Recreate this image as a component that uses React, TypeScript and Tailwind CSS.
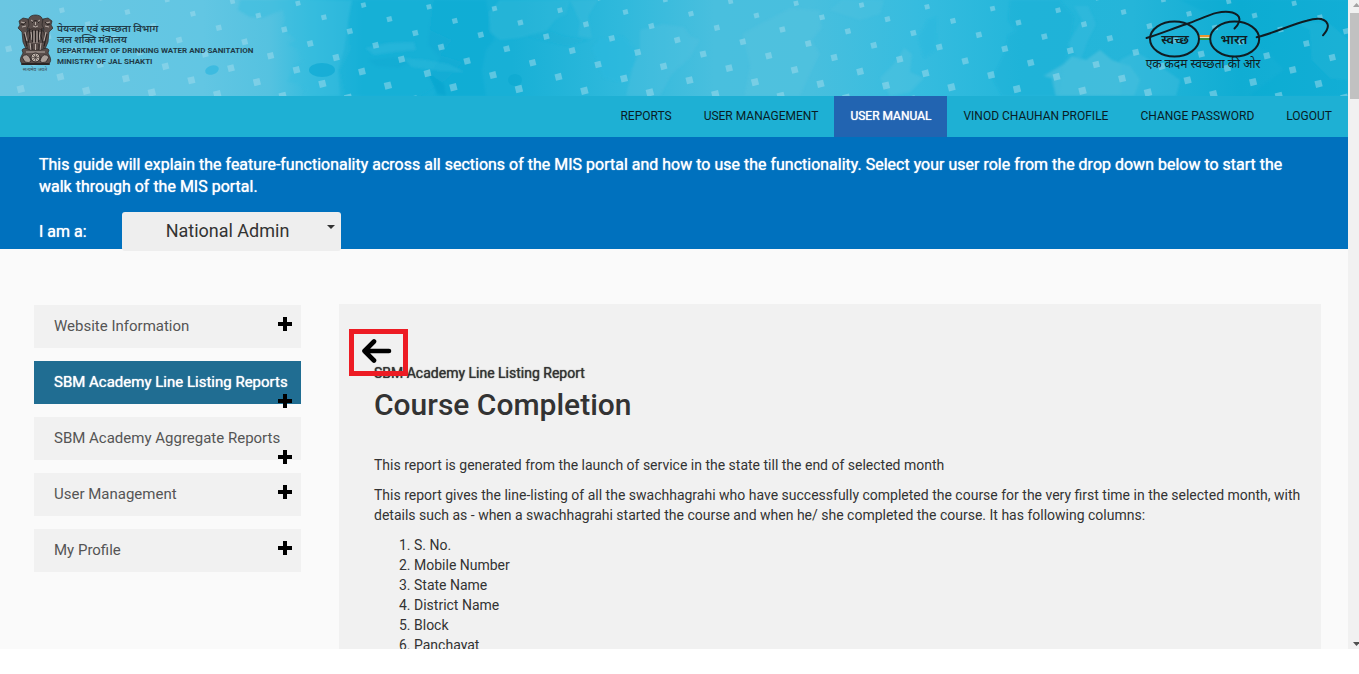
import React from "react";

const navItems = [
  { label: "REPORTS" },
  { label: "USER MANAGEMENT" },
  { label: "USER MANUAL", active: true },
  { label: "VINOD CHAUHAN PROFILE" },
  { label: "CHANGE PASSWORD" },
  { label: "LOGOUT" },
];

const sections = [
  { label: "Website Information" },
  { label: "SBM Academy Line Listing Reports", active: true, low: true },
  { label: "SBM Academy Aggregate Reports", low: true },
  { label: "User Management" },
  { label: "My Profile" },
];

const columns = ["S. No.", "Mobile Number", "State Name", "District Name", "Block", "Panchayat"];

// Confetti squares sit on a slanted lattice and grow towards the bottom.
const confetti: { x: number; y: number; s: number }[] = [];
for (let k = -12; k < 30; k++) {
  for (let m = -6; m < 12; m++) {
    const x = 298 + 65.5 * k + 25.9 * m;
    const y = 3.3 + 1.75 * k + 14 * m;
    if (x > -5 && x < 1355 && y > -4 && y < 100) {
      confetti.push({ x, y, s: 4.6 + y / 38 });
    }
  }
}

function BannerArt() {
  return (
    <svg
      className="absolute inset-0 h-full w-full"
      viewBox="0 0 1348 96"
      preserveAspectRatio="xMidYMid slice"
      aria-hidden="true"
    >
      <defs>
        <linearGradient id="wash" x1="0" x2="1" y1="0" y2="0">
          <stop offset="0" stopColor="#6ac6e2" />
          <stop offset="0.15" stopColor="#62c6e3" />
          <stop offset="0.2" stopColor="#55c2e0" />
          <stop offset="0.23" stopColor="#35bcde" />
          <stop offset="0.27" stopColor="#17b0d7" />
          <stop offset="0.38" stopColor="#18b0d6" />
          <stop offset="0.46" stopColor="#2fb9dc" />
          <stop offset="0.53" stopColor="#49bfde" />
          <stop offset="0.6" stopColor="#48bfde" />
          <stop offset="0.68" stopColor="#36bcdf" />
          <stop offset="0.76" stopColor="#23b6da" />
          <stop offset="0.84" stopColor="#25b5d9" />
          <stop offset="0.92" stopColor="#10add3" />
          <stop offset="1" stopColor="#18b0d6" />
        </linearGradient>
        <filter id="soft">
          <feGaussianBlur stdDeviation="1.2" />
        </filter>
      </defs>
      <rect width="1348" height="96" fill="url(#wash)" />
      <g filter="url(#soft)" opacity=".65">
        <path d="M240 0L238 10L250 17L262 18L272 14L283 10L285 20L282 28L290 35L297 40L288 44L299 50L304 62L294 66L290 76L288 82L300 84L307 90L304 96L345 96L340 70L350 50L348 20L352 0Z" fill="#38bddf" opacity=".8" />
        <path d="M352 0L348 22L344 50L338 70L340 96L420 96L446 80L462 62L440 55L452 40L430 30L434 0Z" fill="#12aed6" opacity=".55" />
        <path d="M434 0L430 24L428 45L440 58L430 72L436 96L486 96L482 70L486 50L494 40L490 22L486 0Z" fill="#08a7d0" opacity=".45" />
        <path d="M365 48L388 43L414 42L416 50L394 52L374 55Z" fill="#3cbddd" opacity=".6" />
        <path d="M368 60L394 57L412 62L398 68L376 66Z" fill="#06a5cd" opacity=".4" />
        <path d="M402 58L426 60L448 64L464 72L440 71L412 67Z" fill="#3cbddd" opacity=".5" />
        <path d="M427 72L444 84L446 96L438 94Z" fill="#029fcb" opacity=".7" />
        <path d="M489 12L500 0L570 0L566 14L555 20L545 33L518 38L500 40L490 32Z" fill="#37badb" opacity=".6" />
        <path d="M524 36L548 30L564 36L590 40L566 46L548 42Z" fill="#10acd2" opacity=".35" />
        <path d="M592 48L600 38L614 40L622 36L635 48L634 66L622 82L604 78L598 64Z" fill="#2bb9e0" opacity=".7" />
        <path d="M570 0L580 22L578 36L592 38L588 16L598 0Z" fill="#58c3df" opacity=".3" />
        <path d="M640 30L662 24L684 27L690 36L700 40L690 58L672 74L660 96L626 96L632 70L640 50Z" fill="#55c2df" opacity=".5" />
        <path d="M742 34L760 24L790 8L820 10L822 28L812 40L820 54L812 70L800 96L744 96L750 66Z" fill="#60c5df" opacity=".4" />
        <path d="M830 10L842 0L884 0L880 14L860 20Z" fill="#5bc4df" opacity=".4" />
        <path d="M892 66L898 58L904 48L912 54L910 72L924 78L910 92L890 96L880 78Z" fill="#5ec5df" opacity=".5" />
        <path d="M918 38L928 20L937 17L936 50L924 58Z" fill="#27b7de" opacity=".6" />
        <path d="M1010 0L1008 20L1016 31L1008 35L1004 54L992 78L1002 96L1060 96L1064 66L1070 44L1074 16L1060 0Z" fill="#12add4" opacity=".45" />
        <path d="M1064 64L1072 56L1086 60L1100 50L1112 60L1130 66L1140 80L1134 96L1056 96L1052 78L1044 76Z" fill="#5cc4df" opacity=".8" />
        <path d="M1074 6L1082 20L1074 34L1068 44L1080 62L1088 40L1096 24L1088 6Z" fill="#41bedf" opacity=".5" />
        <path d="M1120 60L1136 52L1160 66L1180 80L1176 96L1120 96Z" fill="#48bfdf" opacity=".6" />
        <path d="M1180 0L1200 10L1230 16L1240 40L1268 52L1284 70L1262 86L1250 96L1348 96L1348 0Z" fill="#08a8d1" opacity=".35" />
        <path d="M1290 20L1310 30L1312 60L1330 78L1348 80L1348 40L1330 24Z" fill="#34badb" opacity=".35" />
      </g>
      <ellipse cx="322" cy="70" rx="13" ry="7" fill="#12abd4" opacity=".8" />
      <ellipse cx="212" cy="70" rx="7" ry="4.5" fill="#3dbbe0" transform="rotate(-18 212 70)" />
      <ellipse cx="515" cy="80" rx="7" ry="6" fill="#06a6ce" opacity=".4" />
      <g fill="#a2dced" opacity=".5">
        {confetti.map(({ x, y, s }) => (
          <rect
            key={`${x}-${y}`}
            x={x - s / 2}
            y={y - s / 2}
            width={s}
            height={s}
            transform={`rotate(-14 ${x} ${y})`}
          />
        ))}
      </g>
    </svg>
  );
}

function Emblem() {
  return (
    <svg width="36" height="60" viewBox="0 0 36 60" role="img" aria-label="State Emblem of India">
      <g fill="#594e4b" stroke="#2b2524" strokeWidth=".7">
        <path d="M12 4C14 0 23 0 25 4L27 10L26 18L23 22H14L11 18L10 10Z" />
        <path d="M2 7L6 4L11 5L12 11L10 15L12 22L13 31L9 35L6 28L5 18L1 14L3 11Z" />
        <path d="M35 7L31 4L26 5L25 11L27 15L25 22L24 31L28 35L31 28L32 18L36 14L34 11Z" />
        <path d="M10 18L14 15H23L27 18L28 28L26 37H11L9 28Z" />
        <path d="M5 36C7 33 11 35 13 36H24C26 35 30 33 32 36L31 39L33 43C35 48 32 51 28 50H9C5 51 2 48 4 43L6 39Z" />
      </g>
      <g fill="none" stroke="#c5bab3" strokeWidth=".9">
        <path d="M14 6L17 8M23 6L20 8M16 12Q18.500 14 21 12M18.500 8V11" />
        <path d="M4 8L8 9M33 8L29 9M5 13L9 12M32 13L28 12" />
        <path d="M14 18L15 26M17 17V29M20 17V29M23 18L22 26M8 18L10 27M29 18L27 27" />
        <path d="M13 29L14 36M18.500 30V36M24 29L23 36M9 38H28" />
      </g>
      <g fill="none" stroke="#1c1716" strokeWidth=".8">
        <path d="M12 14L13 22L11 29M25 14L24 22L26 29M15.500 16V28M18.500 16V28M21.500 16V28M15 9Q18.500 4 22 9" />
        <path d="M4 10Q7 12 9 8M33 10Q30 12 28 8M7 20L10 32M30 20L27 32M15 30V36M22 30V36" />
      </g>
      <path d="M5 43Q10 38 13 44T8 48ZM32 43Q27 38 24 44T29 48Z" fill="#aaa09a" stroke="#2b2524" strokeWidth=".8" />
      <circle cx="18.500" cy="43.500" r="4.500" fill="#bbb0a8" stroke="#2b2524" strokeWidth="1" />
      <path d="M18.500 39.500V47.500M14.500 43.500H22.500M15.700 40.700L21.300 46.300M21.300 40.700L15.700 46.300" stroke="#3a3230" strokeWidth=".6" />
      <rect x="4" y="49" width="29" height="2" rx="1" fill="#2b2524" />
      <text x="18" y="57" textAnchor="middle" fontSize="5" fill="#3a4a50" fontFamily="'Noto Sans', sans-serif">
        सत्यमेव जयते
      </text>
    </svg>
  );
}

function SwachhBharat() {
  return (
    <svg width="192" height="64" viewBox="0 0 192 64" role="img" aria-label="Swachh Bharat">
      <path d="M61 26H73" stroke="#e8962e" strokeWidth="2" />
      <path d="M61 29H73" stroke="#2c9247" strokeWidth="2" />
      <path d="M61 27.500H73" stroke="#d8e4b8" strokeWidth="1" />
      <g fill="none" stroke="#101c22" strokeLinecap="round" strokeWidth="2">
        <ellipse cx="36.500" cy="29" rx="24.500" ry="17.500" />
        <ellipse cx="96.700" cy="29" rx="24.500" ry="17.500" />
        <path d="M8.500 28C22 24 36 18 48.700 14C60 10 70 5 78.700 2.900C86 1.300 97 0.800 100.800 6.700C103 11 100 15 96.500 18.500" />
        <path d="M118.700 27.300C136 23 152 15 168.700 10.700C178 8 187 8 189.500 14C191 18 188 22 185 25.300" />
      </g>
      <g fill="#101c22" fontFamily="'Noto Sans', sans-serif" textAnchor="middle">
        <text x="37" y="34" fontSize="13" fontWeight="600">
          स्वच्छ
        </text>
        <text x="96" y="34" fontSize="13" fontWeight="600">
          भारत
        </text>
        <text x="65" y="58" fontSize="12" fontWeight="400">
          एक कदम स्वच्छता की ओर
        </text>
      </g>
    </svg>
  );
}

function Plus({ low }: { low?: boolean }) {
  return (
    <svg
      className={`absolute right-[9px] ${low ? "top-[33px]" : "top-3"}`}
      width="14"
      height="14"
      viewBox="0 0 14 14"
      aria-hidden="true"
    >
      <path d="M7 0V14M0 7H14" stroke="#000" strokeWidth="4" />
    </svg>
  );
}

function Scrollbar() {
  return (
    <div className="w-[11px] shrink-0 overflow-hidden bg-[#f1f1f1]" aria-hidden="true">
      <div className="flex h-full w-[17px] flex-col items-center">
        <svg width="17" height="13" viewBox="0 0 17 13">
          <path d="M5 7H12L8.500 3Z" fill="#a3a3a3" />
        </svg>
        <div className="h-[86px] w-[13px] bg-[#c1c1c1]" />
        <svg className="mt-auto" width="17" height="13" viewBox="0 0 17 13">
          <path d="M5 6H12L8.500 10Z" fill="#505050" />
        </svg>
      </div>
    </div>
  );
}

export default function App() {
  return (
    <div className="flex h-screen flex-col bg-white pb-[25px] font-['Roboto','Noto_Sans',sans-serif] text-[#333]">
      <div className="flex min-h-0 flex-1">
        <div className="min-w-0 flex-1 overflow-hidden bg-[#fafafa]">
          <header className="relative h-24 overflow-hidden">
            <BannerArt />
            <div className="relative flex items-start justify-between pr-[18px] pl-[17px]">
              <div className="flex items-start gap-1 pt-[14px]">
                <Emblem />
                <div className="pt-[9px] text-[8px] leading-[11px] font-bold whitespace-nowrap text-[#1f3b47]">
                  <p className="text-[10px] leading-[11px] font-semibold">पेयजल एवं स्वच्छता विभाग</p>
                  <p className="text-[10px] leading-[11px] font-semibold">जल शक्ति मंत्रालय</p>
                  <p>DEPARTMENT OF DRINKING WATER AND SANITATION</p>
                  <p>MINISTRY OF JAL SHAKTI</p>
                </div>
              </div>
              <div className="pt-[10px]">
                <SwachhBharat />
              </div>
            </div>
          </header>

          <nav className="flex h-[41px] justify-end bg-[#1eb0d4] text-xs text-[#081c24]">
            {navItems.map((item) => (
              <a
                key={item.label}
                href="#"
                className={`flex items-center px-4 pb-[2px] ${
                  item.active ? "bg-[#2264b1] text-white [text-shadow:0_0_1px_currentColor]" : ""
                }`}
              >
                {item.label}
              </a>
            ))}
          </nav>

          <section className="h-28 bg-[#0071be] px-[39px] pt-[17px] text-base text-white">
            <p className="leading-[22px] [text-shadow:0_0_1px_currentColor]">
              This guide will explain the feature-functionality across all sections of the MIS portal and how to use
              the functionality. Select your user role from the drop down below to start the walk through of the MIS
              portal.
            </p>
            <div className="mt-[14px] flex items-center">
              <label htmlFor="role" className="w-[83px] [text-shadow:0_0_1px_currentColor]">
                I am a:
              </label>
              <div className="relative">
                <select
                  id="role"
                  defaultValue="National Admin"
                  className="block h-[39px] w-[219px] appearance-none rounded-[3px] bg-[#eee] pr-2 pb-[2px] text-center text-lg text-[#333] [text-align-last:center]"
                >
                  <option>National Admin</option>
                  <option>State Admin</option>
                  <option>District Admin</option>
                </select>
                <svg
                  className="pointer-events-none absolute top-[13px] right-[6px]"
                  width="8"
                  height="4"
                  viewBox="0 0 8 4"
                  aria-hidden="true"
                >
                  <path d="M0 0H8L4 4Z" fill="#333" />
                </svg>
              </div>
            </div>
          </section>

          <div className="flex items-start gap-[38px] pt-[55px] pr-[27px] pl-[34px]">
            <aside className="mt-px flex w-[267px] shrink-0 flex-col gap-[13px]">
              {sections.map((s) => (
                <button
                  key={s.label}
                  type="button"
                  className={`relative h-[43px] pb-px pl-5 text-left text-[15px] whitespace-nowrap ${
                    s.active
                      ? "bg-[#206d92] text-white [text-shadow:0_0_1px_currentColor]"
                      : "bg-[#f1f1f1] text-[#555]"
                  }`}
                >
                  {s.label}
                  <Plus low={s.low} />
                </button>
              ))}
            </aside>

            <main className="relative min-w-0 flex-1 bg-[#f1f1f1] px-[35px] pt-[59px] pb-10 text-sm leading-5">
              <button
                type="button"
                aria-label="Back"
                className="absolute top-[25px] left-[10px] flex h-[47px] w-[59px] items-center border-[5px] border-[#ed1c24] pb-[3px] pl-2"
              >
                <svg width="30" height="24" viewBox="0 0 30 24" aria-hidden="true">
                  <path
                    d="M12 2.500L2.500 12L12 21.500M2.500 12H27"
                    fill="none"
                    stroke="#000"
                    strokeWidth="4.600"
                    strokeLinecap="round"
                    strokeLinejoin="round"
                  />
                </svg>
              </button>
              <p className="[text-shadow:0_0_1px_currentColor]">SBM Academy Line Listing Report</p>
              <h1 className="mt-1 text-[30px] leading-9 font-medium">Course Completion</h1>
              <p className="mt-8">
                This report is generated from the launch of service in the state till the end of selected month
              </p>
              <p className="mt-[10px] -mr-4">
                This report gives the line-listing of all the swachhagrahi who have successfully completed the course
                for the very first time in the selected month, with details such as - when a swachhagrahi started the
                course and when he/ she completed the course. It has following columns:
              </p>
              <ol className="mt-[10px] list-decimal pl-10">
                {columns.map((c) => (
                  <li key={c}>{c}</li>
                ))}
              </ol>
            </main>
          </div>
        </div>
        <Scrollbar />
      </div>
    </div>
  );
}
